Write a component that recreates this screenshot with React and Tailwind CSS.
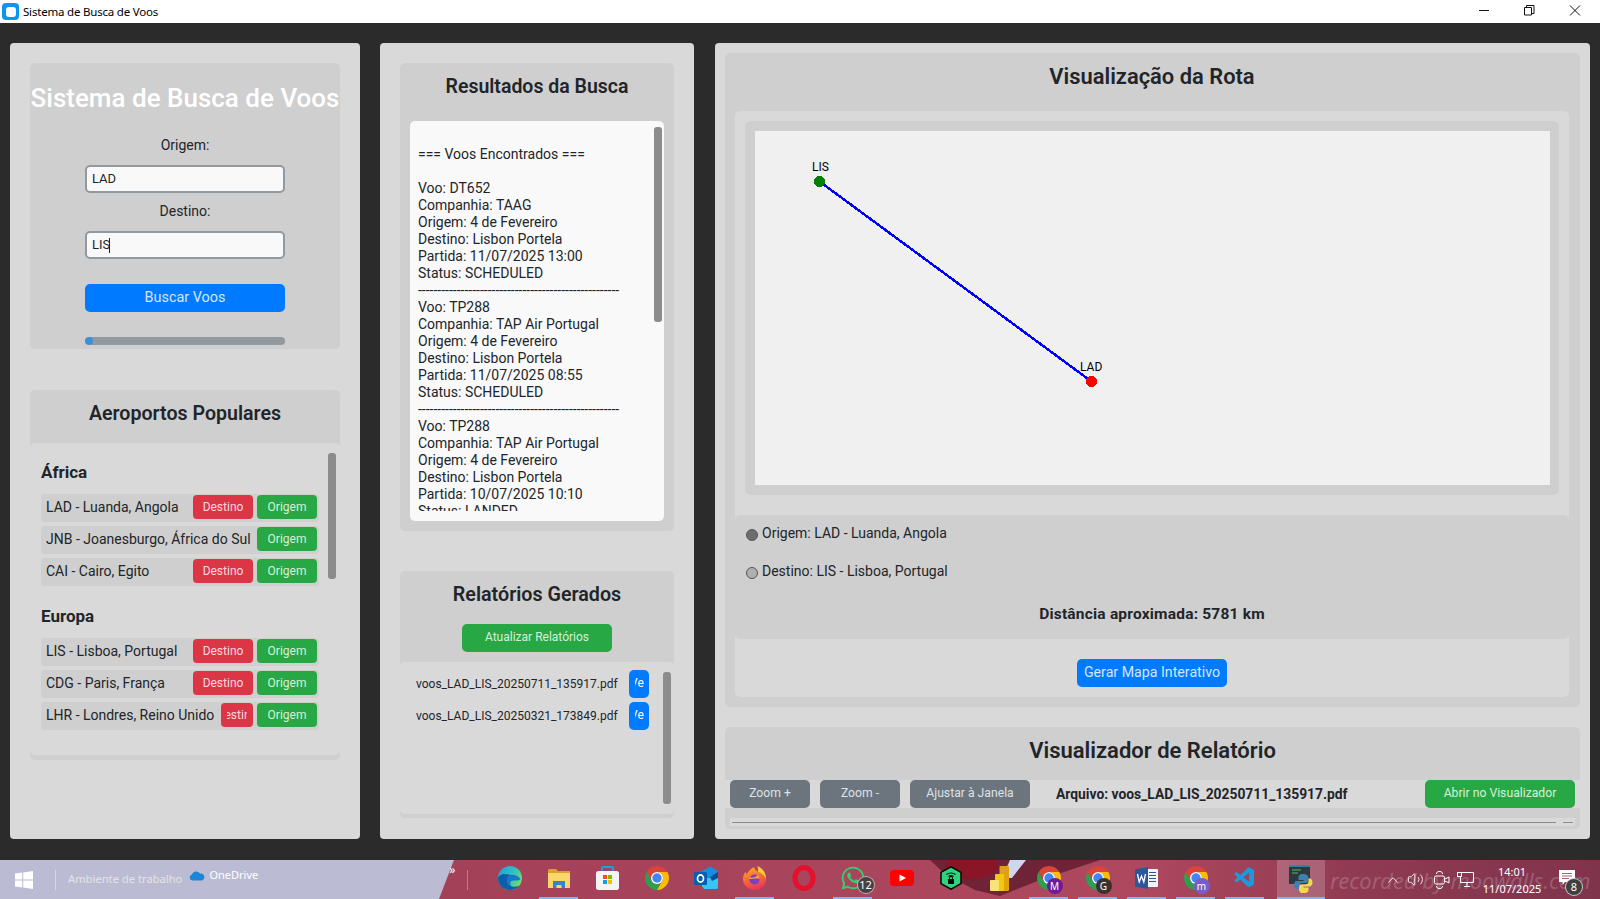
import { FaWhatsapp } from "react-icons/fa";
import { VscVscode } from "react-icons/vsc";
import { Volume2, ChevronUp } from "lucide-react";

const AFRICA = [
  { label: "LAD - Luanda, Angola", dest: "full" },
  { label: "JNB - Joanesburgo, África do Sul", dest: "none" },
  { label: "CAI - Cairo, Egito", dest: "full" },
];

const EUROPA = [
  { label: "LIS - Lisboa, Portugal", dest: "full" },
  { label: "CDG - Paris, França", dest: "full" },
  { label: "LHR - Londres, Reino Unido", dest: "clip" },
];

const FLIGHTS = [
  ["Voo: DT652", "Companhia: TAAG", "Origem: 4 de Fevereiro", "Destino: Lisbon Portela", "Partida: 11/07/2025 13:00", "Status: SCHEDULED"],
  ["Voo: TP288", "Companhia: TAP Air Portugal", "Origem: 4 de Fevereiro", "Destino: Lisbon Portela", "Partida: 11/07/2025 08:55", "Status: SCHEDULED"],
  ["Voo: TP288", "Companhia: TAP Air Portugal", "Origem: 4 de Fevereiro", "Destino: Lisbon Portela", "Partida: 10/07/2025 10:10", "Status: LANDED"],
];

const DASHES = "----------------------------------------------------";

function AirportRow({ airport }) {
  return (
    <div className="flex items-start pt-px h-7 w-[278px] bg-[#cfcfcf] rounded-[4px] pl-[5px] pr-[2px]">
      <span className="flex-1 whitespace-nowrap text-[14px] leading-6 text-[#212529] overflow-hidden">{airport.label}</span>
      {airport.dest === "full" && (
        <button className="w-[60px] h-6 pb-px shrink-0 bg-[#dc3545] text-[#f5dde0] text-[12px] rounded-[4px]">Destino</button>
      )}
      {airport.dest === "clip" && (
        <button className="w-8 h-6 pb-px shrink-0 bg-[#dc3545] text-[#f5dde0] text-[12px] rounded-[4px] overflow-hidden flex items-center justify-center">
          <span className="w-[20px] overflow-hidden flex justify-center">Destino</span>
        </button>
      )}
      <button className="w-[60px] h-6 pb-px shrink-0 ml-1 bg-[#28a745] text-[#d8efdd] text-[12px] rounded-[4px]">Origem</button>
    </div>
  );
}

function Region({ title, items }) {
  return (
    <div>
      <h3 className="text-[17px] leading-5 font-bold text-[#212529] h-5 mb-3">{title}</h3>
      <div className="flex flex-col gap-1">
        {items.map((a) => <AirportRow key={a.label} airport={a} />)}
      </div>
    </div>
  );
}

function LeftPanel() {
  return (
    <aside className="w-[350px] h-full bg-[#d9d9d9] rounded-[4px] p-5 flex flex-col">
      <section className="h-[286px] bg-[#cfcfcf] rounded-[5px] flex flex-col items-center">
        <h1 className="mt-5 h-[30px] leading-[30px] text-[26px] font-medium text-white whitespace-nowrap">Sistema de Busca de Voos</h1>
        <label className="mt-[22px] text-[14px] leading-[20px] text-[#212529]">Origem:</label>
        <div className="mt-[10px] w-[200px] h-7 bg-[#f9f9f9] border-2 border-[#92999f] rounded-[5px] px-[5px] flex items-center text-[13px] text-[#212529]">LAD</div>
        <label className="mt-2 text-[14px] leading-[20px] text-[#212529]">Destino:</label>
        <div className="mt-[10px] w-[200px] h-7 bg-[#f9f9f9] border-2 border-[#92999f] rounded-[5px] px-[5px] flex items-center text-[13px] text-[#212529]">
          LIS<span className="w-px h-[15px] bg-[#212529] -ml-px" />
        </div>
        <button className="mt-[25px] w-[200px] h-7 pb-px bg-[#007bff] text-[#d5e6ff] text-[14.4px] rounded-[5px]">Buscar Voos</button>
        <div className="mt-[25px] w-[200px] h-2 bg-[#929aa0] rounded-full overflow-hidden">
          <div className="w-2 h-2 bg-[#3d8fd9] rounded-full" />
        </div>
      </section>
      <section className="mt-[41px] h-[370px] bg-[#cfcfcf] rounded-[5px] flex flex-col">
        <h2 className="h-[53px] pt-3 text-center text-[19.6px] leading-[24px] font-semibold text-[#212529]">Aeroportos Populares</h2>
        <div className="relative h-[312px] bg-[#d9d9d9] rounded-[5px] pt-[19px] pl-[11px]">
          <div className="flex flex-col gap-5">
            <Region title="África" items={AFRICA} />
            <Region title="Europa" items={EUROPA} />
          </div>
          <div className="absolute left-[298px] top-[10px] w-2 h-[126px] bg-[#8c8c8c] rounded-[3px]" />
        </div>
      </section>
    </aside>
  );
}

function ReportFile({ name }) {
  return (
    <div className="flex items-center h-7 pl-4">
      <span className="w-[213px] whitespace-nowrap text-[12px] text-[#212529]">{name}</span>
      <button className="w-5 h-7 pb-[2px] bg-[#007bff] text-white text-[12px] rounded-[5px] overflow-hidden flex justify-center items-center">
        <span className="w-[9px] overflow-hidden flex justify-center">Ver</span>
      </button>
    </div>
  );
}

function MiddlePanel() {
  return (
    <section className="w-[314px] h-full bg-[#d9d9d9] rounded-[4px] p-5 flex flex-col">
      <div className="h-[468px] bg-[#cfcfcf] rounded-[5px] flex flex-col">
        <h2 className="h-[58px] pt-3 text-center text-[19.5px] leading-[24px] font-semibold text-[#212529]">Resultados da Busca</h2>
        <div className="relative mx-[10px] h-[400px] bg-[#f9f9f9] rounded-[5px] pl-2 pt-[25px] pb-[10px]">
          <div className="h-[365px] overflow-hidden text-[14px] leading-[17px] text-[#212529] whitespace-nowrap">
            <div>=== Voos Encontrados ===</div>
            <div className="h-[17px]" />
            {FLIGHTS.map((f, i) => (
              <div key={i}>
                {f.map((line) => <div key={line}>{line}</div>)}
                <div>{DASHES}</div>
              </div>
            ))}
          </div>
          <div className="absolute left-[244px] top-[6px] w-2 h-[195px] bg-[#8c8c8c] rounded-[3px]" />
        </div>
      </div>
      <div className="mt-10 h-[247px] bg-[#cfcfcf] rounded-[5px] flex flex-col">
        <h2 className="h-[53px] pt-3 text-center text-[19.7px] leading-[24px] font-semibold text-[#212529]">Relatórios Gerados</h2>
        <button className="self-center w-[150px] h-7 pb-[2px] bg-[#28a745] text-[#d8efdd] text-[12px] rounded-[5px]">Atualizar Relatórios</button>
        <div className="relative mt-[10px] h-[152px] w-[275px] bg-[#d9d9d9] rounded-[5px] pt-2 flex flex-col gap-1">
          <ReportFile name="voos_LAD_LIS_20250711_135917.pdf" />
          <ReportFile name="voos_LAD_LIS_20250321_173849.pdf" />
          <div className="absolute left-[263px] top-[10px] w-2 h-[132px] bg-[#8c8c8c] rounded-[3px]" />
        </div>
      </div>
    </section>
  );
}

function RouteMap() {
  return (
    <div className="relative h-[354px] bg-[#f0f0f0]">
      <svg width="795" height="354" className="block" shapeRendering="crispEdges">
        <line x1="64.5" y1="50.5" x2="336.5" y2="250.5" stroke="#0000ff" strokeWidth="2.5" />
        <circle cx="64.5" cy="50.5" r="5.5" fill="#008000" />
        <circle cx="336.5" cy="250.5" r="5.5" fill="#ff0000" />
      </svg>
      <span className="absolute left-[57px] top-[28px] text-[12px] leading-4 text-black">LIS</span>
      <span className="absolute left-[325px] top-[228px] text-[12px] leading-4 text-black">LAD</span>
    </div>
  );
}

function RadioDot({ tone }) {
  return <span className={`w-3 h-3 rounded-full border border-[#555] mt-[5px] ${tone}`} />;
}

function RightPanel() {
  return (
    <section className="w-[875px] h-full bg-[#d9d9d9] rounded-[4px] p-[10px] flex flex-col">
      <div className="h-[654px] bg-[#cfcfcf] rounded-[5px] pl-[10px] pr-[11px] flex flex-col">
        <h2 className="h-[58px] pt-[10px] text-center text-[21.9px] leading-[28px] font-semibold text-[#212529]">Visualização da Rota</h2>
        <div className="h-[586px] bg-[#d9d9d9] rounded-[5px] flex flex-col">
          <div className="mt-[10px] mx-[10px] p-[10px] pr-[9px] bg-[#cfcfcf] rounded-[5px] h-[374px]">
            <RouteMap />
          </div>
          <div className="mt-[20px] h-[124px] bg-[#cfcfcf] rounded-[5px] relative text-[14px] text-[#212529]">
            <div className="absolute left-[11px] top-[9px] flex items-start gap-1 leading-[19px]"><RadioDot tone="bg-[#6e6e6e]" /><span>Origem: LAD - Luanda, Angola</span></div>
            <div className="absolute left-[11px] top-[47px] flex items-start gap-1 leading-[19px]"><RadioDot tone="bg-[#b0b0b0]" /><span>Destino: LIS - Lisboa, Portugal</span></div>
            <div className="absolute inset-x-0 top-[90px] text-center font-bold text-[15.5px] leading-[19px] tracking-[0.2px]">Distância aproximada: 5781 km</div>
          </div>
          <button className="mt-[20px] self-center w-[150px] h-7 pb-px bg-[#007bff] text-[#d5e6ff] text-[14.2px] rounded-[5px]">Gerar Mapa Interativo</button>
        </div>
      </div>
      <div className="mt-5 h-[102px] bg-[#cfcfcf] rounded-[5px] flex flex-col">
        <h2 className="h-[53px] pt-[11px] text-center text-[22px] leading-[26px] font-semibold text-[#212529]">Visualizador de Relatório</h2>
        <div className="h-7 bg-[#d9d9d9] flex items-center px-[5px] text-[12.2px]">
          <button className="w-20 h-7 pb-[2px] bg-[#6c757d] text-[#dee2e6] rounded-[5px]">Zoom +</button>
          <button className="ml-[10px] w-20 h-7 pb-[2px] bg-[#6c757d] text-[#dee2e6] rounded-[5px]">Zoom -</button>
          <button className="ml-[10px] w-[120px] h-7 pb-[2px] bg-[#6c757d] text-[#dee2e6] rounded-[5px]">Ajustar à Janela</button>
          <span className="ml-[26px] flex-1 text-[13.85px] font-bold text-[#212529]">Arquivo: voos_LAD_LIS_20250711_135917.pdf</span>
          <button className="w-[150px] h-7 pb-[2px] bg-[#28a745] text-[#d8efdd] rounded-[5px]">Abrir no Visualizador</button>
        </div>
        <div className="mt-[10px] mx-[5px] h-2 bg-[#d9d9d9] flex items-center px-[2px] gap-[7px]">
          <div className="flex-1 h-px bg-[#8c8c8c]" />
          <div className="w-[10px] h-px bg-[#8c8c8c]" />
        </div>
      </div>
    </section>
  );
}

function TitleBar() {
  return (
    <header className="h-[23px] bg-white flex items-center font-['Noto_Sans',sans-serif] text-[11.5px] tracking-[-0.2px] text-black">
      <div className="ml-[2px] w-[17px] h-[17px] rounded-[4px] bg-[#0a96f0] flex items-center justify-center">
        <div className="w-[10px] h-[10px] rounded-[3px] bg-white" />
      </div>
      <span className="ml-[4px] flex-1">Sistema de Busca de Voos</span>
      <svg width="150" height="23" viewBox="0 0 150 23" fill="none" stroke="#111" strokeWidth="1">
        <path d="M29 10.5h10" />
        <path d="M74.5 7.500h7v7.500h-7zM76.500 7.500v-2h7.500v8h-2.500" />
        <path d="M120 5.500l10 10M130 5.500l-10 10" />
      </svg>
    </header>
  );
}

function Chrome({ badge }) {
  return (
    <span className="relative block w-6 h-6">
      <svg width="24" height="24" viewBox="0 0 24 24" className="block">
        <path d="M1.610 6A12 12 0 0 1 22.390 6H12A6 6 0 0 0 6.800 15z" fill="#db4437" />
        <path d="M12 24A12 12 0 0 1 1.610 6L6.800 15A6 6 0 0 0 17.200 15z" fill="#2f9e4f" />
        <path d="M22.390 6A12 12 0 0 1 12 24L17.200 15A6 6 0 0 0 12 6z" fill="#fbbc05" />
        <circle cx="12" cy="12" r="6" fill="#fff" />
        <circle cx="12" cy="12" r="4.700" fill="#4285f4" />
      </svg>
      {badge}
    </span>
  );
}

function ChromeBadge({ tone, children }) {
  return (
    <span className={`absolute left-[10px] top-[12px] w-4 h-4 rounded-full text-[10px] leading-4 text-center text-white ${tone}`}>{children}</span>
  );
}

const EDGE = (
  <svg width="24" height="24" viewBox="0 0 24 24">
    <defs>
      <linearGradient id="edgeTop" x1="0" y1="0" x2="1" y2="0.6">
        <stop offset="0" stopColor="#1a9fdc" />
        <stop offset="0.6" stopColor="#34c1c0" />
        <stop offset="1" stopColor="#6fdc6a" />
      </linearGradient>
    </defs>
    <circle cx="12" cy="12" r="12" fill="url(#edgeTop)" />
    <path d="M0 12C0 19 5.500 24 12 24c4 0 7.500-1.700 9.500-4.500-5 2.500-11 1-12.300-3.500-.9-3 .8-6.300 3.300-7C8 7.500 1.500 7 0 12z" fill="#0d5ea8" />
    <path d="M12.500 9c-2.500.7-4.200 4-3.300 7 .6 2 2.200 3.300 4.300 3.900C11.500 17.500 12 14.500 15.500 14.500c2.500 0 5.500.5 7-1.500-3-4-7-4.700-10-4z" fill="#1578c6" />
  </svg>
);

const FOLDER = (
  <svg width="22" height="19" viewBox="0 0 22 19">
    <path d="M0 1.500A1.500 1.500 0 0 1 1.500 0H8l2 2h12v17H0z" fill="#dca12c" />
    <path d="M0 4h22v15H0z" fill="#fbd66b" />
    <path d="M5 19v-7h12v7h-3.500v-3h-5v3z" fill="#2f86cc" />
  </svg>
);

const STORE = (
  <svg width="23" height="24" viewBox="0 0 23 24">
    <path d="M6 7V2.500A1.500 1.500 0 0 1 7.500 1h8A1.500 1.500 0 0 1 17 2.500V7" fill="none" stroke="#1da0dd" strokeWidth="2" />
    <rect y="5" width="23" height="19" rx="2.500" fill="#f4f4f4" />
    <rect x="7" y="9" width="4" height="4" fill="#f25022" />
    <rect x="12" y="9" width="4" height="4" fill="#7fba00" />
    <rect x="7" y="14" width="4" height="4" fill="#00a4ef" />
    <rect x="12" y="14" width="4" height="4" fill="#ffb900" />
  </svg>
);

const OUTLOOK = (
  <svg width="24" height="24" viewBox="0 0 24 24">
    <path d="M8 5l8-4.500 8 4.500v16a2 2 0 0 1-2 2H10l-2-3z" fill="#1490df" />
    <path d="M8 12h16v9a2 2 0 0 1-2 2H10l-2-3z" fill="#37c6f4" />
    <path d="M16 11l8-5v6l-6 3z" fill="#0a4f96" />
    <rect y="6" width="13" height="13" rx="1.500" fill="#0a5db0" />
    <ellipse cx="6.500" cy="12.500" rx="3" ry="3.600" fill="none" stroke="#fff" strokeWidth="1.700" />
  </svg>
);

const FIREFOX = (
  <svg width="23" height="24" viewBox="0 0 23 24">
    <defs>
      <linearGradient id="foxBody" x1="0.2" y1="0" x2="0.5" y2="1">
        <stop offset="0" stopColor="#ffb020" />
        <stop offset="0.6" stopColor="#f5633a" />
        <stop offset="1" stopColor="#e8365f" />
      </linearGradient>
    </defs>
    <path d="M11.500 24C5 24 0 19 0 13c0-3 1-5.500 2.500-7l1 2.500C5 5 8 3 11 1c.5 2.500 2 3.500 4 4.500 0-1.500 0-3.500-1-5.500 5 2 9 7 9 13 0 6-5 11-11.500 11z" fill="url(#foxBody)" />
    <path d="M15 0.500c5 2 8 7 8 12.500-1.500-4-5-6-8-7.500.5-1.500.5-3.500 0-5z" fill="#ffcf3d" />
    <circle cx="11.500" cy="13.500" r="5" fill="#7b3fc4" />
    <path d="M6.500 11c2 1.500 6 .5 8-2 1 .5 2 2 2 4-3-1-6 0-10.500 0z" fill="#f7a02a" />
  </svg>
);

const OPERA = (
  <svg width="24" height="26" viewBox="0 0 24 26">
    <ellipse cx="12" cy="13" rx="9" ry="10.500" fill="none" stroke="#e3112c" strokeWidth="5" />
  </svg>
);

const WHATSAPP = (
  <span className="relative block w-6 h-6">
    <FaWhatsapp size={26} color="#2bd46c" className="absolute -left-[1px] -top-[1px]" />
    <span className="absolute left-4 top-[10px] w-[18px] h-[18px] rounded-full bg-[#4a4044] border border-white/60 text-[11px] leading-4 text-center text-white">12</span>
  </span>
);

const YOUTUBE = (
  <svg width="24" height="16" viewBox="0 0 24 16">
    <rect width="24" height="16" rx="4" fill="#ff0000" />
    <path d="M9.500 4.500 16 8l-6.500 3.500z" fill="#fff" />
  </svg>
);

const VPN_HEX = (
  <svg width="22" height="24" viewBox="0 0 22 24">
    <polygon points="11,0.800 21,6.400 21,17.600 11,23.200 1,17.600 1,6.400" fill="#2ed47d" stroke="#0a0a0a" strokeWidth="1.600" />
    <path d="M6.500 8.500c2.500-2 6.500-2 9 0M8.500 10.500c1.500-1 3.500-1 5 0" fill="none" stroke="#0a0a0a" strokeWidth="1.200" />
    <rect x="8" y="13" width="6" height="5" fill="#0a0a0a" />
    <path d="M9.500 13v-1a1.500 1.500 0 0 1 3 0v1" fill="none" stroke="#0a0a0a" strokeWidth="1" />
  </svg>
);

const POWERBI = (
  <svg width="19" height="25" viewBox="0 0 19 25">
    <rect x="9.500" y="0" width="9.500" height="25" rx="1" fill="#e0a20f" />
    <rect x="5" y="8" width="9" height="17" rx="1" fill="#f2c811" />
    <rect x="0" y="14" width="9" height="11" rx="1" fill="#f8e27a" />
  </svg>
);

const WORD = (
  <svg width="23" height="22" viewBox="0 0 23 22">
    <rect x="8" y="2" width="15" height="18" rx="1" fill="#f2f4f8" />
    <path d="M14 5.500h7M14 8.500h7M14 11.500h7M14 14.500h7" stroke="#2b579a" strokeWidth="1.200" />
    <polygon points="0,2.500 13,0 13,22 0,19.500" fill="#2b579a" />
    <path d="M2.500 7l1.700 8 2.300-6 2.300 6L10.500 7" fill="none" stroke="#fff" strokeWidth="1.300" />
  </svg>
);

const PYTHON = (
  <svg width="24" height="28" viewBox="0 0 24 28">
    <rect x="0" y="0" width="21" height="19" fill="#2c3a40" />
    <rect x="0" y="0" width="21" height="2" fill="#3a7ca5" />
    <path d="M3 5h9M3 8h6" stroke="#58b368" strokeWidth="1" />
    <path d="M14 9c-4 0-4.500 1.800-4.500 4v2h5v1H8c-2.500 0-3 2-3 4s1 4 3 4h2v-3c0-2 1.500-3 3.500-3h3c2 0 3-1 3-3v-2c0-2-1.500-4-5.500-4z" fill="#3e7fb4" />
    <path d="M15 28c4 0 4.500-1.800 4.500-3.500V22.500h-5v-1h5.500c2.500 0 3.500-2 3.500-4s-1-4-3-4h-1v3c0 2-1.500 3-3.500 3h-3c-2 0-3 1-3 3v2c0 2 1.500 4 4.500 4z" fill="#f5d74e" />
  </svg>
);

const APPS = [
  { id: "edge", icon: EDGE },
  { id: "files", icon: FOLDER, running: true },
  { id: "store", icon: STORE },
  { id: "chrome", icon: <Chrome /> },
  { id: "outlook", icon: OUTLOOK },
  { id: "firefox", icon: FIREFOX, running: true },
  { id: "opera", icon: OPERA },
  { id: "whatsapp", icon: WHATSAPP, running: true },
  { id: "youtube", icon: YOUTUBE },
  { id: "hex", icon: VPN_HEX },
  { id: "powerbi", icon: POWERBI },
  { id: "chrome-m", icon: <Chrome badge={<ChromeBadge tone="bg-[#6d1b9a]">M</ChromeBadge>} />, running: true },
  { id: "chrome-g", icon: <Chrome badge={<ChromeBadge tone="bg-[#3b3230]">G</ChromeBadge>} />, running: true },
  { id: "word", icon: WORD, running: true },
  { id: "chrome-n", icon: <Chrome badge={<ChromeBadge tone="bg-[#7a5cc9]">m</ChromeBadge>} />, running: true },
  { id: "vscode", icon: <VscVscode size={24} color="#1a9be0" />, running: true },
];

function Taskbar() {
  return (
    <footer className="relative h-[39px] overflow-hidden bg-[#bcbbd4] font-['Noto_Sans',sans-serif]">
      {/* wallpaper */}
      <svg width="1600" height="39" className="absolute inset-0">
        <defs>
          <linearGradient id="wallFade" x1="0" y1="0" x2="1" y2="0">
            <stop offset="0" stopColor="#a34159" />
            <stop offset="0.6" stopColor="#ae485f" />
            <stop offset="0.8" stopColor="#8e3a52" />
            <stop offset="1" stopColor="#80344c" />
          </linearGradient>
        </defs>
        <polygon points="454,0 1600,0 1600,39 439,39" fill="url(#wallFade)" />
        <polygon points="930,0 1100,0 1040,20 1000,36 975,30 945,14" fill="#6f2337" />
        <ellipse cx="972" cy="6" rx="26" ry="13" fill="#8a1526" />
        <polygon points="1010,0 1026,0 1012,18 1002,18" fill="#cfd6ee" />
      </svg>
      <div className="absolute inset-0 flex items-center text-white">
        <div className="w-[485px] h-full shrink-0 flex items-center">
          <svg width="18" height="18" viewBox="0 0 18 18" className="ml-[15px] fill-white">
            <path d="M0 2.600l7.200-1v6.900H0zM8.200 1.400 18 0v8.500H8.200zM0 9.500h7.200v6.900l-7.200-1zM8.200 9.500H18V18l-9.800-1.400z" />
          </svg>
          <div className="ml-[22px] w-px h-5 bg-white/40" />
          <span className="ml-3 text-[11.2px] text-[#e3e3e3] whitespace-nowrap">Ambiente de trabalho</span>
          <svg width="16" height="11" viewBox="0 0 16 11" className="ml-[7px] -mt-2">
            <path d="M3.500 10.500a3 3 0 0 1-.6-5.900A4.500 4.500 0 0 1 11 3.600 3.500 3.500 0 0 1 12.500 10.500z" fill="#1b85d8" />
          </svg>
          <span className="ml-1 -mt-2 text-[11px] text-white">OneDrive</span>
          <span className="ml-[191px] -mt-5 text-[12px] leading-none">»</span>
          <div className="ml-3 w-px h-5 bg-white/30" />
        </div>

        {APPS.map((app) => (
          <div key={app.id} className="relative w-[49px] h-full shrink-0 flex items-center justify-center pb-[3px]">
            {app.icon}
            {app.running && <span className="absolute bottom-0 left-[5px] w-[39px] h-[2px] bg-[#7db8ea]" />}
          </div>
        ))}

        <div className="relative ml-[8px] w-12 h-full shrink-0 bg-white/20 flex items-center justify-center pb-[2px]">
          {PYTHON}
          <span className="absolute bottom-0 inset-x-0 h-[2px] bg-[#7db8ea]" />
        </div>

        <span className="absolute left-[1330px] top-[5px] text-[22px] leading-[30px] italic text-white/20 whitespace-nowrap">recorded by moowalls.com</span>
        <ChevronUp size={18} strokeWidth={1.2} className="absolute left-[1384px] top-[11px]" />
        <Volume2 size={17} strokeWidth={1.2} className="absolute left-[1407px] top-[11px]" />
        <svg width="16" height="18" viewBox="0 0 16 18" fill="none" stroke="#fff" strokeWidth="1" className="absolute left-[1434px] top-[11px]">
          <path d="M2.500 3c0-1.500 1-2.500 2.500-2.500h1c1.500 0 2.500 1 2.500 2.500M2.500 15c0 1.500 1 2.500 2.500 2.500h1c1.500 0 2.500-1 2.500-2.500" />
          <rect x="0.500" y="5" width="10" height="8" rx="1.500" />
          <path d="M11 8l4-2v6l-4-2" />
        </svg>
        <svg width="17" height="15" viewBox="0 0 17 15" fill="none" stroke="#fff" strokeWidth="1" className="absolute left-[1457px] top-[12px]">
          <path d="M3.500 0.500h13v10h-13zM7 14.500h6M10 10.500v4" />
          <rect x="0.500" y="0.500" width="4" height="4" fill="#8e3a52" />
        </svg>
        <div className="absolute left-[1481px] top-[3px] w-[62px] text-center text-[11px] leading-[17px] text-white">
          <div>14:01</div>
          <div>11/07/2025</div>
        </div>
        <svg width="16" height="16" viewBox="0 0 16 16" className="absolute left-[1559px] top-[10px]">
          <path d="M0 0h16v12H6l-2.500 3v-3H0z" fill="#fff" />
          <path d="M3 3.500h10M3 6h10M3 8.500h7" stroke="#8e3a52" strokeWidth="0.800" />
        </svg>
        <span className="absolute left-[1565px] top-[18px] w-[18px] h-[18px] rounded-full bg-[#3f3f3f] border border-white/70 text-[11px] leading-4 text-center text-white">8</span>
      </div>
    </footer>
  );
}

export default function App() {
  return (
    <div className="w-[1600px] h-[899px] overflow-hidden flex flex-col bg-[#2b2b2b] font-['Roboto',sans-serif]">
      <TitleBar />
      <main className="h-[837px] pt-5 pb-[21px] px-[10px] flex gap-5 items-stretch">
        <LeftPanel />
        <MiddlePanel />
        <div className="ml-px"><RightPanel /></div>
      </main>
      <Taskbar />
    </div>
  );
}
